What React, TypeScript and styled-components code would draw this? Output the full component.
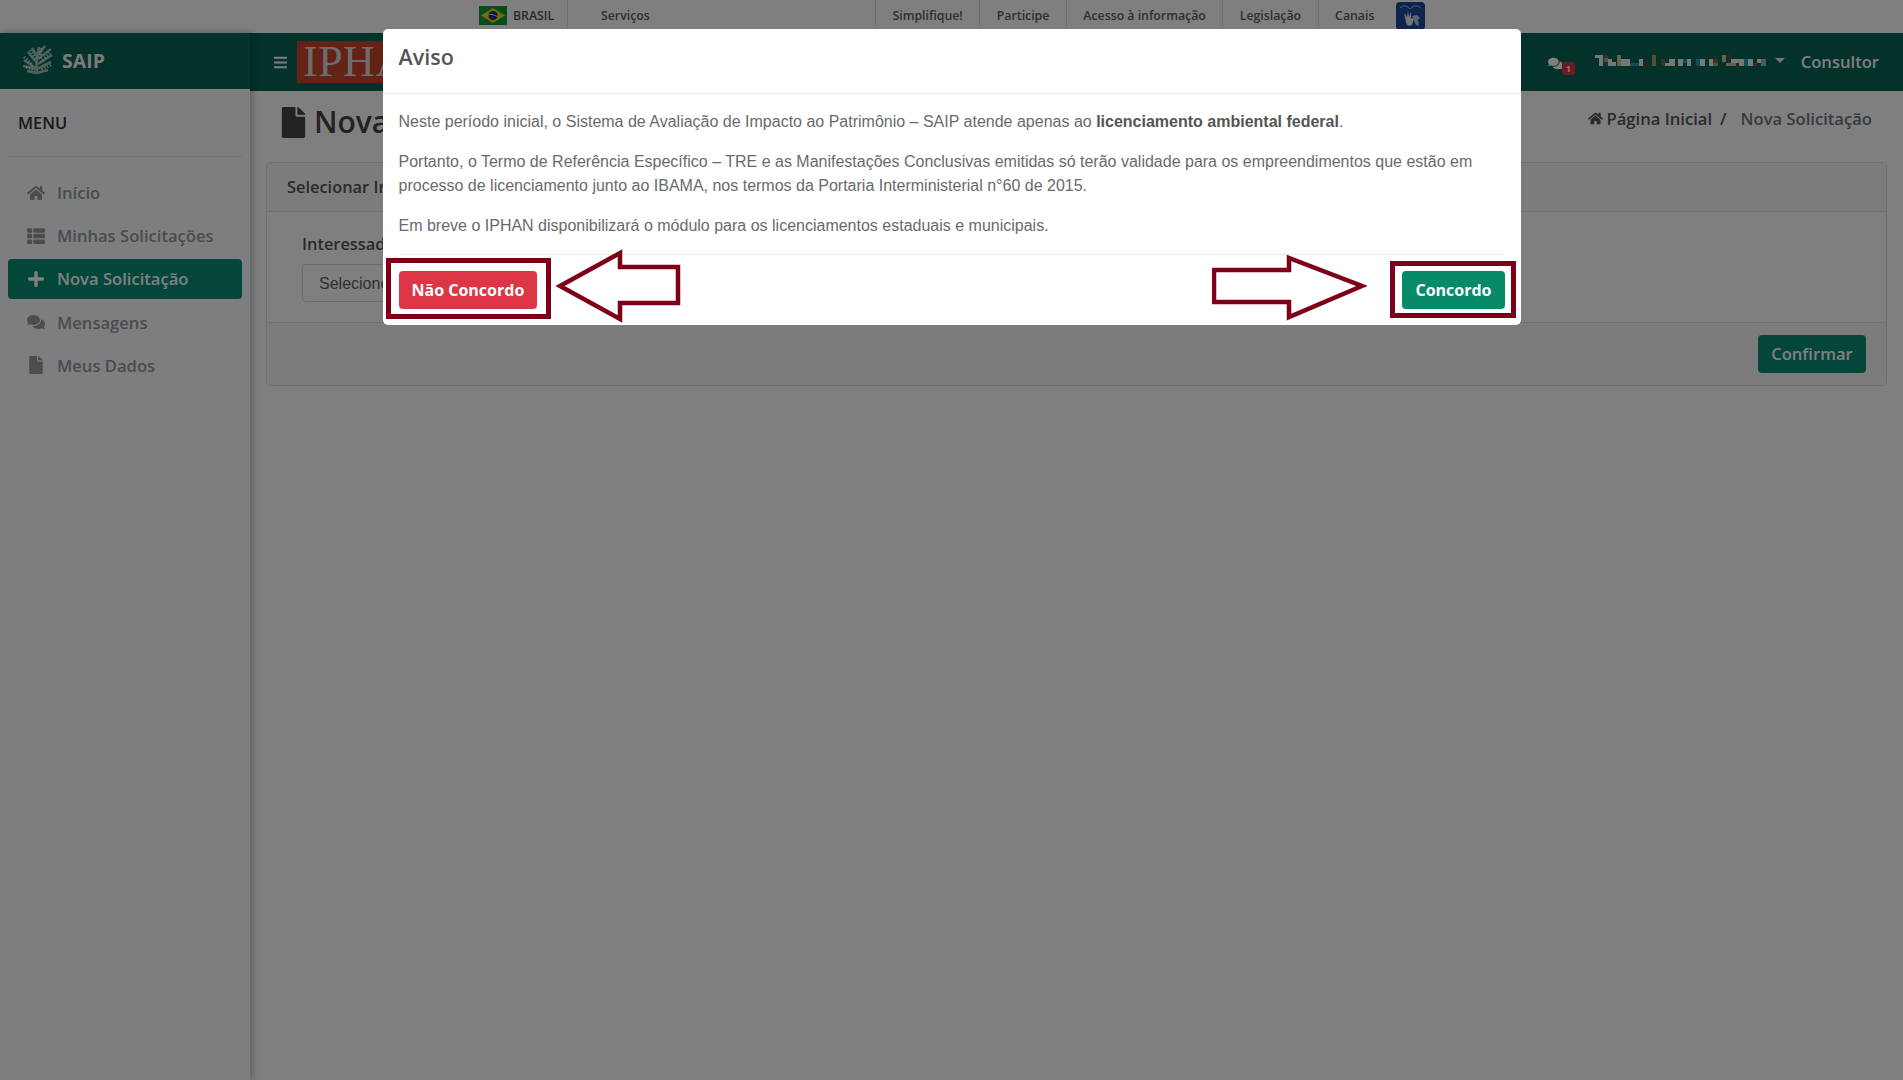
import React from "react";
import styled, { createGlobalStyle } from "styled-components";
import { FaBars, FaComments, FaFile, FaHome, FaPlus, FaThList } from "react-icons/fa";

const openSans = `"Open Sans", "Noto Sans", sans-serif`;
const arial = `"Liberation Sans", Arial, sans-serif`;

const govLinks = ["Simplifique!", "Participe", "Acesso à informação", "Legislação", "Canais"];

const menu = [
  { label: "Início", icon: <FaHome /> },
  { label: "Minhas Solicitações", icon: <FaThList /> },
  { label: "Nova Solicitação", icon: <FaPlus />, active: true },
  { label: "Mensagens", icon: <FaComments /> },
  { label: "Meus Dados", icon: <FaFile /> },
];

const G = "#e8f0ee";
const TEAL = "#1a9ab8";
const BROWN = "#8a5a48";
const OLIVE = "#a8a060";
const TAN = "#d0c498";
const NAVY = "#3060a0";
const DARK = "#605040";

// the name in the header is pixelated in the screenshot: [x, y, w, h, colour]
const nameBlocks: [number, number, number, number, string][] = [
  [0, 0, 8, 3, G], [9, 0, 4, 3, BROWN], [4, 3, 4, 8, G], [9, 3, 4, 4, OLIVE], [9, 7, 4, 4, NAVY],
  [13, 4, 4, 7, G], [17, 7, 4, 4, G], [22, 0, 4, 11, TAN], [26, 4, 9, 7, G], [35, 8, 9, 3, TEAL],
  [44, 4, 4, 7, G], [48, 8, 5, 3, DARK], [57, 0, 4, 11, OLIVE], [66, 4, 4, 7, BROWN], [70, 8, 4, 3, G],
  [74, 4, 6, 7, G], [83, 4, 5, 7, G], [88, 4, 4, 4, TEAL], [92, 4, 4, 7, G], [101, 4, 4, 7, TEAL],
  [105, 4, 5, 7, G], [114, 4, 4, 7, G], [118, 4, 5, 4, BROWN], [118, 8, 5, 3, OLIVE], [127, 0, 4, 7, TAN],
  [131, 0, 5, 4, DARK], [131, 8, 10, 3, TAN], [136, 4, 8, 4, G], [144, 4, 5, 7, G], [149, 4, 4, 7, TEAL],
  [153, 4, 5, 7, G], [158, 8, 4, 3, BROWN], [162, 4, 5, 4, G], [166, 4, 5, 7, "#8fb8c0"],
];

export default function App() {
  return (
    <>
      <GlobalStyle />
      <GovBar>
        <GovCountry>
          <svg width="28" height="19" viewBox="0 0 28 19">
            <rect width="28" height="19" fill="#0a9a3a" />
            <polygon points="14,2 26,9.5 14,17 2,9.5" fill="#f7d417" />
            <circle cx="14" cy="9.5" r="4.6" fill="#1c2f80" />
            <path d="M9.6 8.6c3-.6 6.2.2 8.6 2" stroke="#fff" strokeWidth="0.9" fill="none" />
          </svg>
          <span>BRASIL</span>
        </GovCountry>
        <GovServices>Serviços</GovServices>
        {govLinks.map((l) => (
          <GovLink key={l}>{l}</GovLink>
        ))}
        <VLibras>
          <svg width="29" height="28" viewBox="0 0 29 28">
            <path d="M4 6c3-3 6-3 10 1c4-4 7-4 11-1" stroke="#c8d4e8" strokeWidth="0.8" fill="none" />
            <path d="M8 11l3 4 1-6 1 6 2-5v6l3 1-2 6c-3 2-6 0-6-3z" fill="#e4e8f0" />
            <path d="M16 14l5-1 3 3-2 2 1 6-3-1-2-4z" fill="#b8c4d8" />
          </svg>
        </VLibras>
      </GovBar>

      <Shell>
        <Sidebar>
          <Brand>
            <svg width="33" height="33" viewBox="0 0 33 33">
              <g stroke="#cfe0da" strokeWidth="2.6" fill="none" opacity="0.75">
                <path d="M16 30C15 22 16 12 18 3" />
                <path d="M16 25L3 16M16 25L2 22M15 29L6 27M16 19L7 8M17 14L11 4" />
                <path d="M16 25L30 18M17 20L31 11M17 15L30 5M17 11L24 2M16 29L27 26" />
              </g>
              <g stroke="#e4eeea" strokeWidth="3" strokeDasharray="1.5 1.5" fill="none" opacity="0.7">
                <path d="M3 13L12 21M5 23L14 27M9 6L15 15M20 4L19 15M29 9L20 18M30 21L19 26" />
              </g>
            </svg>
            <span>SAIP</span>
          </Brand>
          <MenuTitle>MENU</MenuTitle>
          <MenuList>
            {menu.map((m) => (
              <MenuItem key={m.label} $active={m.active}>
                <MenuIcon>{m.icon}</MenuIcon>
                {m.label}
              </MenuItem>
            ))}
          </MenuList>
        </Sidebar>

        <Main>
          <TopBar>
            <Burger>
              <FaBars />
            </Burger>
            <Logo>IPHAN</Logo>
            <TopRight>
              <Chat>
                <FaComments />
                <Badge>1</Badge>
              </Chat>
              <UserName>
                <svg width="171" height="11" viewBox="0 0 171 11" shapeRendering="crispEdges">
                  {nameBlocks.map(([x, y, w, h, c], i) => (
                    <rect key={i} x={x} y={y} width={w} height={h} fill={c} />
                  ))}
                </svg>
                <Caret />
              </UserName>
              <Role>Consultor</Role>
            </TopRight>
          </TopBar>

          <Content>
            <PageHead>
              <PageTitle>
                <FaFile />
                Nova Solicitação
              </PageTitle>
              <Breadcrumb>
                <FaHome />
                <BreadLink>Página Inicial</BreadLink>
                <BreadSep>/</BreadSep>
                <BreadCurrent>Nova Solicitação</BreadCurrent>
              </Breadcrumb>
            </PageHead>

            <Card>
              <CardHeader>Selecionar Interessado</CardHeader>
              <CardBody>
                <FieldLabel>Interessado</FieldLabel>
                <SelectBox>Selecione</SelectBox>
              </CardBody>
              <CardFooter>
                <ConfirmButton>Confirmar</ConfirmButton>
              </CardFooter>
            </Card>
          </Content>
        </Main>
      </Shell>

      <Overlay>
        <Modal>
          <ModalHeader>Aviso</ModalHeader>
          <ModalBody>
            <p>
              Neste período inicial, o Sistema de Avaliação de Impacto ao Patrimônio – SAIP atende apenas ao{" "}
              <strong>licenciamento ambiental federal</strong>.
            </p>
            <p>
              Portanto, o Termo de Referência Específico – TRE e as Manifestações Conclusivas emitidas só terão validade
              para os empreendimentos que estão em processo de licenciamento junto ao IBAMA, nos termos da Portaria
              Interministerial n°60 de 2015.
            </p>
            <p>Em breve o IPHAN disponibilizará o módulo para os licenciamentos estaduais e municipais.</p>
          </ModalBody>
          <ModalFooter>
            <ActionButton $color="#dc3545">Não Concordo</ActionButton>
            <ActionButton $color="#068a68">Concordo</ActionButton>
          </ModalFooter>

          {/* annotations drawn on top of the screenshot */}
          <Highlight $left={3} $top={229} $width={165} $height={61} />
          <Highlight $left={1007} $top={232} $width={126} $height={57} />
          <Arrow $left={171} $top={219} width="128" height="76" viewBox="0 0 128 76">
            <polygon points="6,38 66,5 66,19 124,19 124,55 66,55 66,71" />
          </Arrow>
          <Arrow $left={829} $top={226} width="155" height="66" viewBox="0 0 155 66">
            <polygon points="2,15 77,15 77,3 150,31 77,62 77,47 2,47" />
          </Arrow>
        </Modal>
      </Overlay>
    </>
  );
}

const GlobalStyle = createGlobalStyle`
  html, body { margin: 0; padding: 0; height: 100%; }
  body { background: #fff; font-family: ${openSans}; overflow: hidden; }
  * { box-sizing: border-box; }
`;

const GovBar = styled.div`
  display: flex; align-items: stretch; height: 33px; padding-left: 479px;
  background: #fff; font-size: 12.3px; font-weight: 600; color: #606060;
`;
const GovCountry = styled.div`
  display: flex; align-items: center; gap: 6px; width: 89px; padding-bottom: 2px; border-right: 1px solid #dfdfdf;
  color: #555;
  svg { flex: none; }
`;
const GovServices = styled.div`
  display: flex; align-items: center; width: 307px; padding: 0 0 2px 33px;
`;
const GovLink = styled.div`
  display: flex; align-items: center; padding: 0 16.5px 2px; border-left: 1px solid #dfdfdf;
  &:last-of-type { border-right: 1px solid #dfdfdf; }
`;
const VLibras = styled.div`
  width: 29px; height: 28px; margin: 2px 0 0 5px; background: #1a4a9c; border-radius: 4px;
`;

const Shell = styled.div`
  display: flex; height: 1047px; background: #fff;
`;
const Sidebar = styled.aside`
  flex: none; width: 250px; background: #fbfdff; box-shadow: 2px 0 8px rgba(0, 0, 0, 0.3); position: relative; z-index: 2;
`;
const Brand = styled.div`
  display: flex; align-items: center; gap: 8px; height: 56px; padding: 0 0 1px 21px; background: #046454;
  color: #fff; font-size: 19.5px; font-weight: 700;
  span { opacity: 0.95; }
`;
const MenuTitle = styled.div`
  margin: 0 8px; padding: 24px 10px 23px; border-bottom: 1px solid #e4e6e8;
  font-size: 16.4px; font-weight: 600; line-height: 20px; color: #333;
`;
const MenuList = styled.nav`
  display: flex; flex-direction: column; gap: 3.2px; padding: 15.5px 8px 0;
`;
const MenuItem = styled.div<{ $active?: boolean }>`
  display: flex; align-items: center; height: 40px; padding-left: 19px; border-radius: 4px;
  font-size: 16.6px; font-weight: 600;
  background: ${({ $active }) => ($active ? "#068e74" : "transparent")};
  color: ${({ $active }) => ($active ? "#fff" : "#96999e")};
`;
const MenuIcon = styled.span`
  display: flex; align-items: center; width: 30px; font-size: 18px;
`;

const Main = styled.div`
  flex: 1; min-width: 0; display: flex; flex-direction: column;
`;
const TopBar = styled.header`
  display: flex; align-items: center; height: 58px; flex: none; padding-left: 23px;
  background: #046454; color: #fff;
`;
const Burger = styled.div`
  display: flex; font-size: 15px; margin-right: 9px;
`;
const Logo = styled.div`
  display: flex; align-items: center; width: 140px; height: 42px; padding-left: 6px; background: #c8442c;
  font-family: "Liberation Serif", serif; font-size: 44px; line-height: 42px; letter-spacing: 0.5px; color: #d8d8d8;
`;
const TopRight = styled.div`
  display: flex; align-items: center; margin-left: auto; padding-right: 24px;
`;
const Chat = styled.div`
  position: relative; display: flex; font-size: 15px; margin-right: 32px; margin-top: 3px;
`;
const Badge = styled.span`
  position: absolute; left: 14px; top: 6px; width: 13px; height: 13px; border-radius: 3px; background: #dc3545;
  font-size: 9px; font-weight: 700; line-height: 13px; text-align: center; color: #fff;
`;
const UserName = styled.div`
  display: flex; align-items: center; gap: 9px; margin-right: 16px; margin-top: -4px;
`;
const Caret = styled.span`
  width: 0; height: 0; border-left: 5px solid transparent; border-right: 5px solid transparent; border-top: 5px solid #fff; opacity: 0.9;
`;
const Role = styled.div`
  margin-top: -2px; font-size: 16.6px; font-weight: 600;
`;

const Content = styled.main`
  flex: 1; padding: 15px 16px 0;
`;
const PageHead = styled.div`
  display: flex; align-items: flex-start; justify-content: space-between; height: 56px; padding: 0 15px;
`;
const PageTitle = styled.h1`
  display: flex; align-items: center; gap: 8px; margin: 0; font-size: 30px; font-weight: 600; line-height: 32px; color: #444;
  svg { width: 25px; height: 31px; }
`;
const Breadcrumb = styled.div`
  display: flex; align-items: center; margin: 1px 0 0 0; font-size: 16.6px; font-weight: 600; color: #555;
  svg { font-size: 15px; margin-right: 4px; }
`;
const BreadLink = styled.span``;
const BreadSep = styled.span`
  margin: 0 14px 0 8px;
`;
const BreadCurrent = styled.span`
  color: #6f7580;
`;

const Card = styled.section`
  border: 1px solid #e0e0e0; border-radius: 4px; background: #fff; overflow: hidden;
`;
const CardHeader = styled.div`
  height: 49px; padding: 0 20px 2px; display: flex; align-items: center; background: #f8f8f8; border-bottom: 1px solid #e0e0e0;
  font-size: 16.4px; font-weight: 600; color: #555;
`;
const CardBody = styled.div`
  height: 110px; padding: 20px 35px 0;
`;
const FieldLabel = styled.div`
  margin-bottom: 8px; font-size: 16.4px; font-weight: 600; line-height: 24px; color: #555;
`;
const SelectBox = styled.div`
  display: flex; align-items: center; width: 400px; height: 38px; padding: 1px 16px 0; border: 1px solid #d4d8dc; border-radius: 4px;
  font-family: ${arial}; font-size: 16px; color: #5a6268;
`;
const CardFooter = styled.div`
  display: flex; justify-content: flex-end; align-items: center; height: 63px; padding: 0 20px 0 0; background: #f8f8f8; border-top: 1px solid #e0e0e0;
`;
const ConfirmButton = styled.button`
  width: 108px; height: 38px; padding: 0 0 2px; border: 0; border-radius: 4px; background: #068e74;
  font-family: ${openSans}; font-size: 16.6px; font-weight: 600; color: #fff;
`;

const Overlay = styled.div`
  position: fixed; inset: 0; z-index: 10; background: rgba(0, 0, 0, 0.5);
  display: flex; justify-content: center; align-items: flex-start; padding-top: 29px;
`;
const Modal = styled.div`
  position: relative; width: 1138px; background: #fff; border-radius: 5px;
`;
const ModalHeader = styled.div`
  height: 65px; padding: 0 16px 10px; display: flex; align-items: center; border-bottom: 1px solid #e9ecef;
  font-size: 21.5px; font-weight: 600; color: #555;
`;
const ModalBody = styled.div`
  margin: 0 16px; padding: 16px 0 16px; border-bottom: 1px solid #e9ecef;
  font-family: ${arial}; font-size: 16px; line-height: 24px; color: #6a6a6a;
  p { margin: 0 0 16px; }
  p:last-child { margin: 0; }
  strong { color: #555; }
`;
const ModalFooter = styled.div`
  display: flex; justify-content: space-between; padding: 16px;
`;
const ActionButton = styled.button<{ $color: string }>`
  height: 38px; padding: 0 13px; border: 0; border-radius: 4px; background: ${({ $color }) => $color};
  font-family: ${openSans}; font-size: 16px; font-weight: 700; color: #fff;
`;
const Highlight = styled.div<{ $left: number; $top: number; $width: number; $height: number }>`
  position: absolute; left: ${({ $left }) => $left}px; top: ${({ $top }) => $top}px;
  width: ${({ $width }) => $width}px; height: ${({ $height }) => $height}px;
  border: 5px solid #7e0018; pointer-events: none;
`;
const Arrow = styled.svg<{ $left: number; $top: number }>`
  position: absolute; left: ${({ $left }) => $left}px; top: ${({ $top }) => $top}px;
  polygon { fill: #fff; stroke: #7e0018; stroke-width: 4.5; }
`;
